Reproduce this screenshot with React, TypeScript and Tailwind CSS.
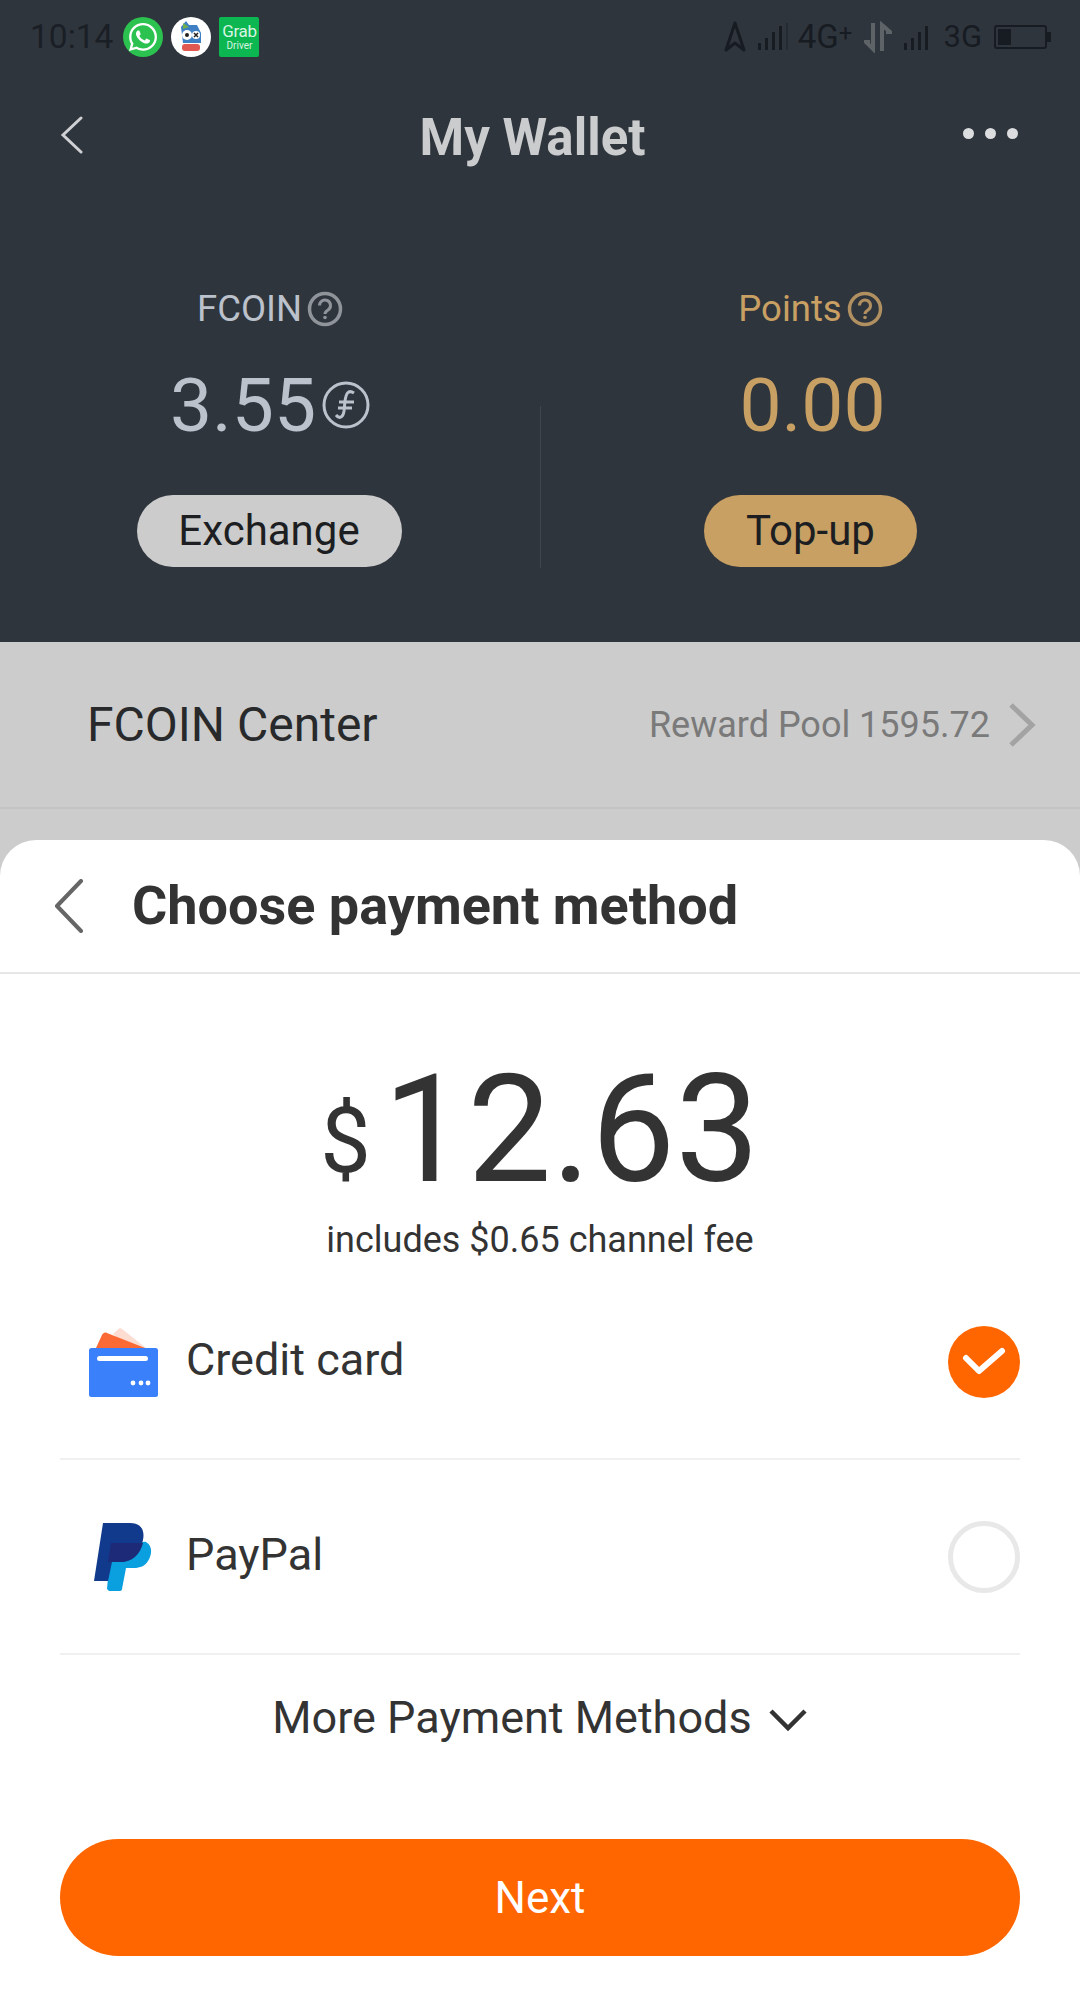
import React from 'react'
import { FaWhatsapp } from 'react-icons/fa'

const Signal = ({ dim }: { dim?: boolean }) => (
  <svg width="32" height="28" viewBox="0 0 32 28">
    <rect x="1" y="20" width="3" height="7" fill="#171b22" />
    <rect x="8" y="15" width="3" height="12" fill="#171b22" />
    <rect x="15" y="9" width="3" height="18" fill="#171b22" />
    <rect x="22" y="3" width="3" height="24" fill="#171b22" />
    {dim && <rect x="29" y="0" width="2" height="27" fill="#262b33" />}
  </svg>
)

const StatusBar = () => (
  <div className="flex h-[72px] items-center justify-between pl-[30px] pr-[29px] pt-[1px]">
    <div className="flex items-center">
      <span className="mr-[10px] text-[33.5px] leading-none text-[#1a1e25]">10:14</span>
      <div className="flex h-[40px] w-[40px] items-center justify-center rounded-full bg-[#2cc24f] text-white">
        <FaWhatsapp size={32} />
      </div>
      <div className="ml-[8px] flex h-[40px] w-[40px] items-center justify-center rounded-full bg-white">
        <svg width="36" height="36" viewBox="0 0 36 36">
          <path d="M8 8 L13 2 L16 6 L24 6 L28 14 L28 24 L10 24 Z" fill="#3f7fc4" />
          <path d="M10 4 L16 8 L10 10 Z" fill="#6fb04a" />
          <circle cx="14" cy="16" r="5" fill="#fff" />
          <circle cx="23" cy="16" r="4" fill="#fff" />
          <circle cx="14" cy="16" r="2" fill="#222" />
          <path d="M21 14 L25 18 M25 14 L21 18" stroke="#222" strokeWidth="1.5" />
          <rect x="9" y="25" width="18" height="7" rx="3" fill="#e0584f" />
        </svg>
      </div>
      <div className="ml-[8px] flex h-[40px] w-[40px] flex-col items-center justify-center rounded-[2px] bg-[#0cb650] text-[#d8f5e2]">
        <span className="text-[17px] leading-[17px] tracking-[-0.3px]">Grab</span>
        <span className="text-[10px] leading-[11px]">Driver</span>
      </div>
    </div>
    <div className="flex items-center text-[#171b22]">
      <svg width="24" height="34" viewBox="0 0 24 34" className="mr-[10px]">
        <path d="M12 3 L21 30 L12 23 L3 30 Z" fill="none" stroke="#171b22" strokeWidth="3" strokeLinejoin="round" />
      </svg>
      <Signal dim />
      <span className="ml-[9px] text-[33px] leading-none">4G</span>
      <span className="mb-[8px] text-[24px] leading-none">+</span>
      <svg width="28" height="32" viewBox="0 0 28 32" className="ml-[12px] mr-[11px]">
        <path d="M9 2 V28 L2 21 H6" fill="none" stroke="#5e6368" strokeWidth="4" />
        <path d="M18 30 V4 L26 11 H22" fill="none" stroke="#5e6368" strokeWidth="4" />
      </svg>
      <Signal />
      <span className="ml-[8px] text-[31px] leading-none">3G</span>
      <div className="ml-[12px] flex items-center">
        <div className="h-[24px] w-[53px] rounded-[3px] border-[2px] border-[#171b22] p-[2px]">
          <div className="h-full w-[13px] bg-[#171b22]" />
        </div>
        <div className="h-[10px] w-[4px] bg-[#171b22]" />
      </div>
    </div>
  </div>
)

const Help = ({ color }: { color: string }) => (
  <svg width="36" height="36" viewBox="0 0 36 36" className="ml-[5px]">
    <circle cx="18" cy="18" r="15.5" fill="none" stroke={color} strokeWidth="3.5" />
    <path d="M12.5 14.5 a5.5 5.5 0 1 1 8.5 4.6 c-2 1.3-3 2-3 4" fill="none" stroke={color} strokeWidth="3" />
    <circle cx="18" cy="26.5" r="1.8" fill={color} />
  </svg>
)

const Chevron = ({ className, color, w = 3 }: { className?: string; color: string; w?: number }) => (
  <svg width="30" height="54" viewBox="0 0 30 54" className={className}>
    <path d="M27 2 L3 27 L27 52" fill="none" stroke={color} strokeWidth={w} strokeLinecap="round" strokeLinejoin="round" />
  </svg>
)

const WalletHeader = () => (
  <div className="h-[642px] bg-[#2f353d]">
    <StatusBar />
    <div className="flex h-[130px] items-center justify-between pl-[60px] pr-[62px]">
      <svg width="24" height="38" viewBox="0 0 24 38" className="mb-[4px]">
        <path d="M21 2 L3 19 L21 36" fill="none" stroke="#cfd1d4" strokeWidth="3" strokeLinecap="round" />
      </svg>
      <span className="ml-[18px] text-[51px] font-bold leading-none text-[#cbcccd]">My Wallet</span>
      <div className="mb-[8px] flex gap-[11px]">
        <div className="h-[11px] w-[11px] rounded-full bg-[#dcdddf]" />
        <div className="h-[11px] w-[11px] rounded-full bg-[#dcdddf]" />
        <div className="h-[11px] w-[11px] rounded-full bg-[#dcdddf]" />
      </div>
    </div>
    <div className="flex pt-[89px]">
      <div className="flex w-[540px] flex-col items-center">
        <div className="flex h-[36px] items-center text-[36.5px] leading-none text-[#bcc2cc]">
          FCOIN
          <Help color="#8f949b" />
        </div>
        <div className="mt-[42px] flex h-[72px] items-center text-[75px] leading-none text-[#bcc2cc]">
          3.55
          <svg width="48" height="48" viewBox="0 0 48 48" className="ml-[6px]">
            <circle cx="24" cy="24" r="22" fill="none" stroke="#bcc2cc" strokeWidth="3" />
            <path d="M32 12 C26 8 24 13 23 20 L22 30 C21 37 17 38 14 34 M17 21 H32 M16 27 H30" fill="none" stroke="#bcc2cc" strokeWidth="3" />
          </svg>
        </div>
        <div className="mr-[2px] mt-[54px] flex h-[72px] w-[265px] items-center justify-center rounded-full bg-[#cccccc] pb-[2px] text-[42px] text-[#1c1e22]">
          Exchange
        </div>
      </div>
      <div className="mt-[115px] h-[162px] w-[1px] bg-[#41464e]" />
      <div className="flex flex-1 flex-col items-center">
        <div className="flex h-[36px] items-center text-[36.5px] leading-none text-[#c9a063]">
          Points
          <Help color="#b08f60" />
        </div>
        <div className="ml-[4px] mt-[42px] flex h-[72px] items-center text-[75px] leading-none text-[#c9a063]">0.00</div>
        <div className="mt-[54px] flex h-[72px] w-[213px] items-center justify-center rounded-full bg-[#c9a063] pb-[2px] text-[42px] text-[#1c1e22]">
          Top-up
        </div>
      </div>
    </div>
  </div>
)

const CenterRow = () => (
  <div className="flex h-[167px] items-center justify-between border-b-[2px] border-[#c3c3c3] pl-[87px] pr-[43px]">
    <span className="text-[48px] text-[#28292b]">FCOIN Center</span>
    <div className="flex items-center">
      <span className="text-[36px] text-[#7a7a7a]">Reward Pool 1595.72</span>
      <svg width="30" height="46" viewBox="0 0 30 46" className="ml-[17px]">
        <path d="M4 3 L25 23 L4 43" fill="none" stroke="#a3a3a3" strokeWidth="5" />
      </svg>
    </div>
  </div>
)

const CardIcon = () => (
  <svg width="72" height="72" viewBox="0 0 72 72" className="mt-[4px]">
    <path d="M25 6 L31 0.5 C32 0 33 0 34 1 L58 20 H40 Z" fill="#fddcd2" />
    <path d="M8 20 L14 7 C15 5 17 4 19 5 L57 20 Z" fill="#fb6a35" />
    <rect x="1" y="20" width="69" height="49" rx="2.5" fill="#3a80fb" />
    <rect x="9" y="28" width="51" height="5" rx="2.5" fill="#fff" />
    <circle cx="45" cy="55" r="2.4" fill="#fff" />
    <circle cx="53" cy="55" r="2.4" fill="#fff" />
    <circle cx="60" cy="55" r="2.4" fill="#fff" />
  </svg>
)

const PayPalIcon = () => (
  <svg width="60" height="68" viewBox="0 0 60 68" className="ml-[6px]">
    <path d="M17 20 H42 C46 20 50 18 52 19 C59 23 58 32 54 38 C51 43 46 45 40 45 H32 L28 66 C28 67 27 68 26 68 H15 L13 66 Z" fill="#0a9fdf" />
    <path d="M9 0 H36 C47 0 51 7 49 17 C46 31 38 39 26 39 H18 L14 58 H0 Z" fill="#123a8c" />
    <path d="M17 20 H49 C46 32 38 39 26 39 H14 Z" fill="#1c2a78" />
  </svg>
)

const MethodRow = ({ icon, label, selected }: { icon: React.ReactNode; label: string; selected?: boolean }) => (
  <div className="flex h-[195px] items-center justify-between border-b-[2px] border-[#f0f0f0]">
    <div className="flex items-center">
      <div className="flex w-[126px] items-center pl-[28px]">{icon}</div>
      <span className="mb-[4px] text-[45px] leading-none text-[#333333]">{label}</span>
    </div>
    {selected ? (
      <div className="flex h-[72px] w-[72px] items-center justify-center rounded-full bg-[#ff6600]">
        <svg width="44" height="34" viewBox="0 0 44 34">
          <path d="M4 13 L17 26 L40 6" fill="none" stroke="#fff" strokeWidth="6" strokeLinecap="round" strokeLinejoin="round" />
        </svg>
      </div>
    ) : (
      <div className="h-[72px] w-[72px] rounded-full border-[5px] border-[#e8e8e8]" />
    )}
  </div>
)

const PaymentSheet = () => (
  <div className="mt-[31px] h-[1176px] rounded-t-[36px] bg-white">
    <div className="flex h-[134px] items-center border-b-[2px] border-[#e6e6e6] pl-[54px]">
      <Chevron color="#666666" w={4} />
      <span className="ml-[48px] text-[54px] font-bold leading-none text-[#333333]">Choose payment method</span>
    </div>
    <div className="flex h-[234px] items-end justify-center pb-[3px] text-[#333333]">
      <span className="mb-[18px] mr-[12px] text-[90px] leading-none">$</span>
      <span className="text-[150px] leading-none">12.63</span>
    </div>
    <div className="mt-[11px] text-center text-[36px] leading-[42px] text-[#333333]">includes $0.65 channel fee</div>
    <div className="mx-[60px] mt-[4px]">
      <MethodRow icon={<CardIcon />} label="Credit card" selected />
      <MethodRow icon={<PayPalIcon />} label="PayPal" />
      <div className="flex h-[106px] items-center justify-center pt-[20px] text-[45px] text-[#333333]">
        More Payment Methods
        <svg width="40" height="24" viewBox="0 0 40 24" className="ml-[16px] mt-[4px]">
          <path d="M3 3 L20 20 L37 3" fill="none" stroke="#333333" strokeWidth="4.5" />
        </svg>
      </div>
      <div className="mt-[78px] flex h-[117px] items-center justify-center rounded-full bg-[#ff6600] text-[44px] text-white">
        Next
      </div>
    </div>
  </div>
)

export default function App() {
  return (
    <div className="h-[2016px] w-[1080px] overflow-hidden bg-[#cccccc] font-['Roboto',sans-serif]">
      <WalletHeader />
      <CenterRow />
      <PaymentSheet />
    </div>
  )
}
